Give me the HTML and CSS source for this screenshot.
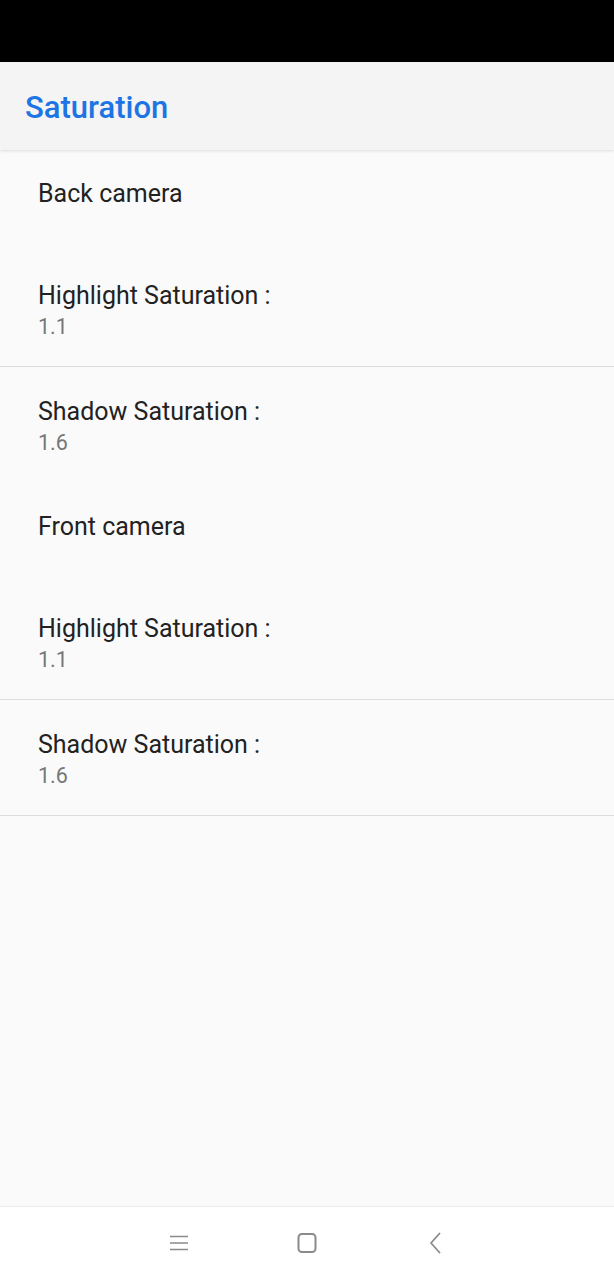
FILE: index.html
```html
<!DOCTYPE html>
<html>
<head>
<meta charset="utf-8">
<link rel="stylesheet" href="styles.css">
</head>
<body>
<div class="screen">
  <div class="statusbar"></div>
  <header class="appbar"><h1 class="title">Saturation</h1></header>
  <main class="list">
    <div class="category">Back camera</div>
    <div class="item divided">
      <div class="item-title">Highlight Saturation :</div>
      <div class="item-value">1.1</div>
    </div>
    <div class="item">
      <div class="item-title">Shadow Saturation :</div>
      <div class="item-value">1.6</div>
    </div>
    <div class="category">Front camera</div>
    <div class="item divided">
      <div class="item-title">Highlight Saturation :</div>
      <div class="item-value">1.1</div>
    </div>
    <div class="item divided">
      <div class="item-title">Shadow Saturation :</div>
      <div class="item-value">1.6</div>
    </div>
  </main>
  <nav class="navbar">
    <svg class="nav-icon" width="24" height="24" viewBox="0 0 24 24"><path d="M3 5.5h18M3 12h18M3 18.5h18" stroke="#8a8a8a" stroke-width="1.6" fill="none"/></svg>
    <svg class="nav-icon" width="24" height="24" viewBox="0 0 24 24"><rect x="3.5" y="3" width="17" height="18" rx="3.5" stroke="#8a8a8a" stroke-width="2" fill="none"/></svg>
    <svg class="nav-icon" width="24" height="24" viewBox="0 0 24 24"><path d="M16.5 2.5 L8 12 L16.5 21.5" stroke="#8a8a8a" stroke-width="1.8" fill="none" stroke-linecap="round" stroke-linejoin="round"/></svg>
  </nav>
</div>
</body>
</html>
```
FILE: styles.css
```css
* { box-sizing: border-box; margin: 0; padding: 0; }
html, body { width: 614px; height: 1280px; overflow: hidden; }
body { font-family: Roboto, "Noto Sans", sans-serif; background: #fafafa; }
.screen { display: flex; flex-direction: column; height: 1280px; }
.statusbar { height: 62px; background: #000; flex: none; }
.appbar {
  height: 88px; flex: none; background: #f4f4f4;
  display: flex; align-items: center; padding: 2px 0 0 25px;
  box-shadow: 0 1px 3px rgba(0,0,0,0.12);
  position: relative; z-index: 1;
}
.title { font-size: 31px; font-weight: 500; color: #1d74e4; }
.list { flex: 1; background: #fafafa; }
.category {
  height: 101px; padding: 27px 0 0 38px;
  font-size: 25px; line-height: 33px; color: #222;
}
.item {
  height: 116px; padding: 5px 38px 0;
  display: flex; flex-direction: column; justify-content: center;
}
.item.divided { border-bottom: 1px solid #dddddd; }
.item-title { font-size: 25px; line-height: 31px; color: #222; }
.item-value { font-size: 21.5px; line-height: 32px; color: #777; }
.navbar {
  height: 74px; flex: none; background: #fff; border-top: 1px solid #ececec;
  display: flex; justify-content: center; align-items: center; gap: 104px;
  padding-bottom: 1px;
}
.nav-icon { display: block; }
```
